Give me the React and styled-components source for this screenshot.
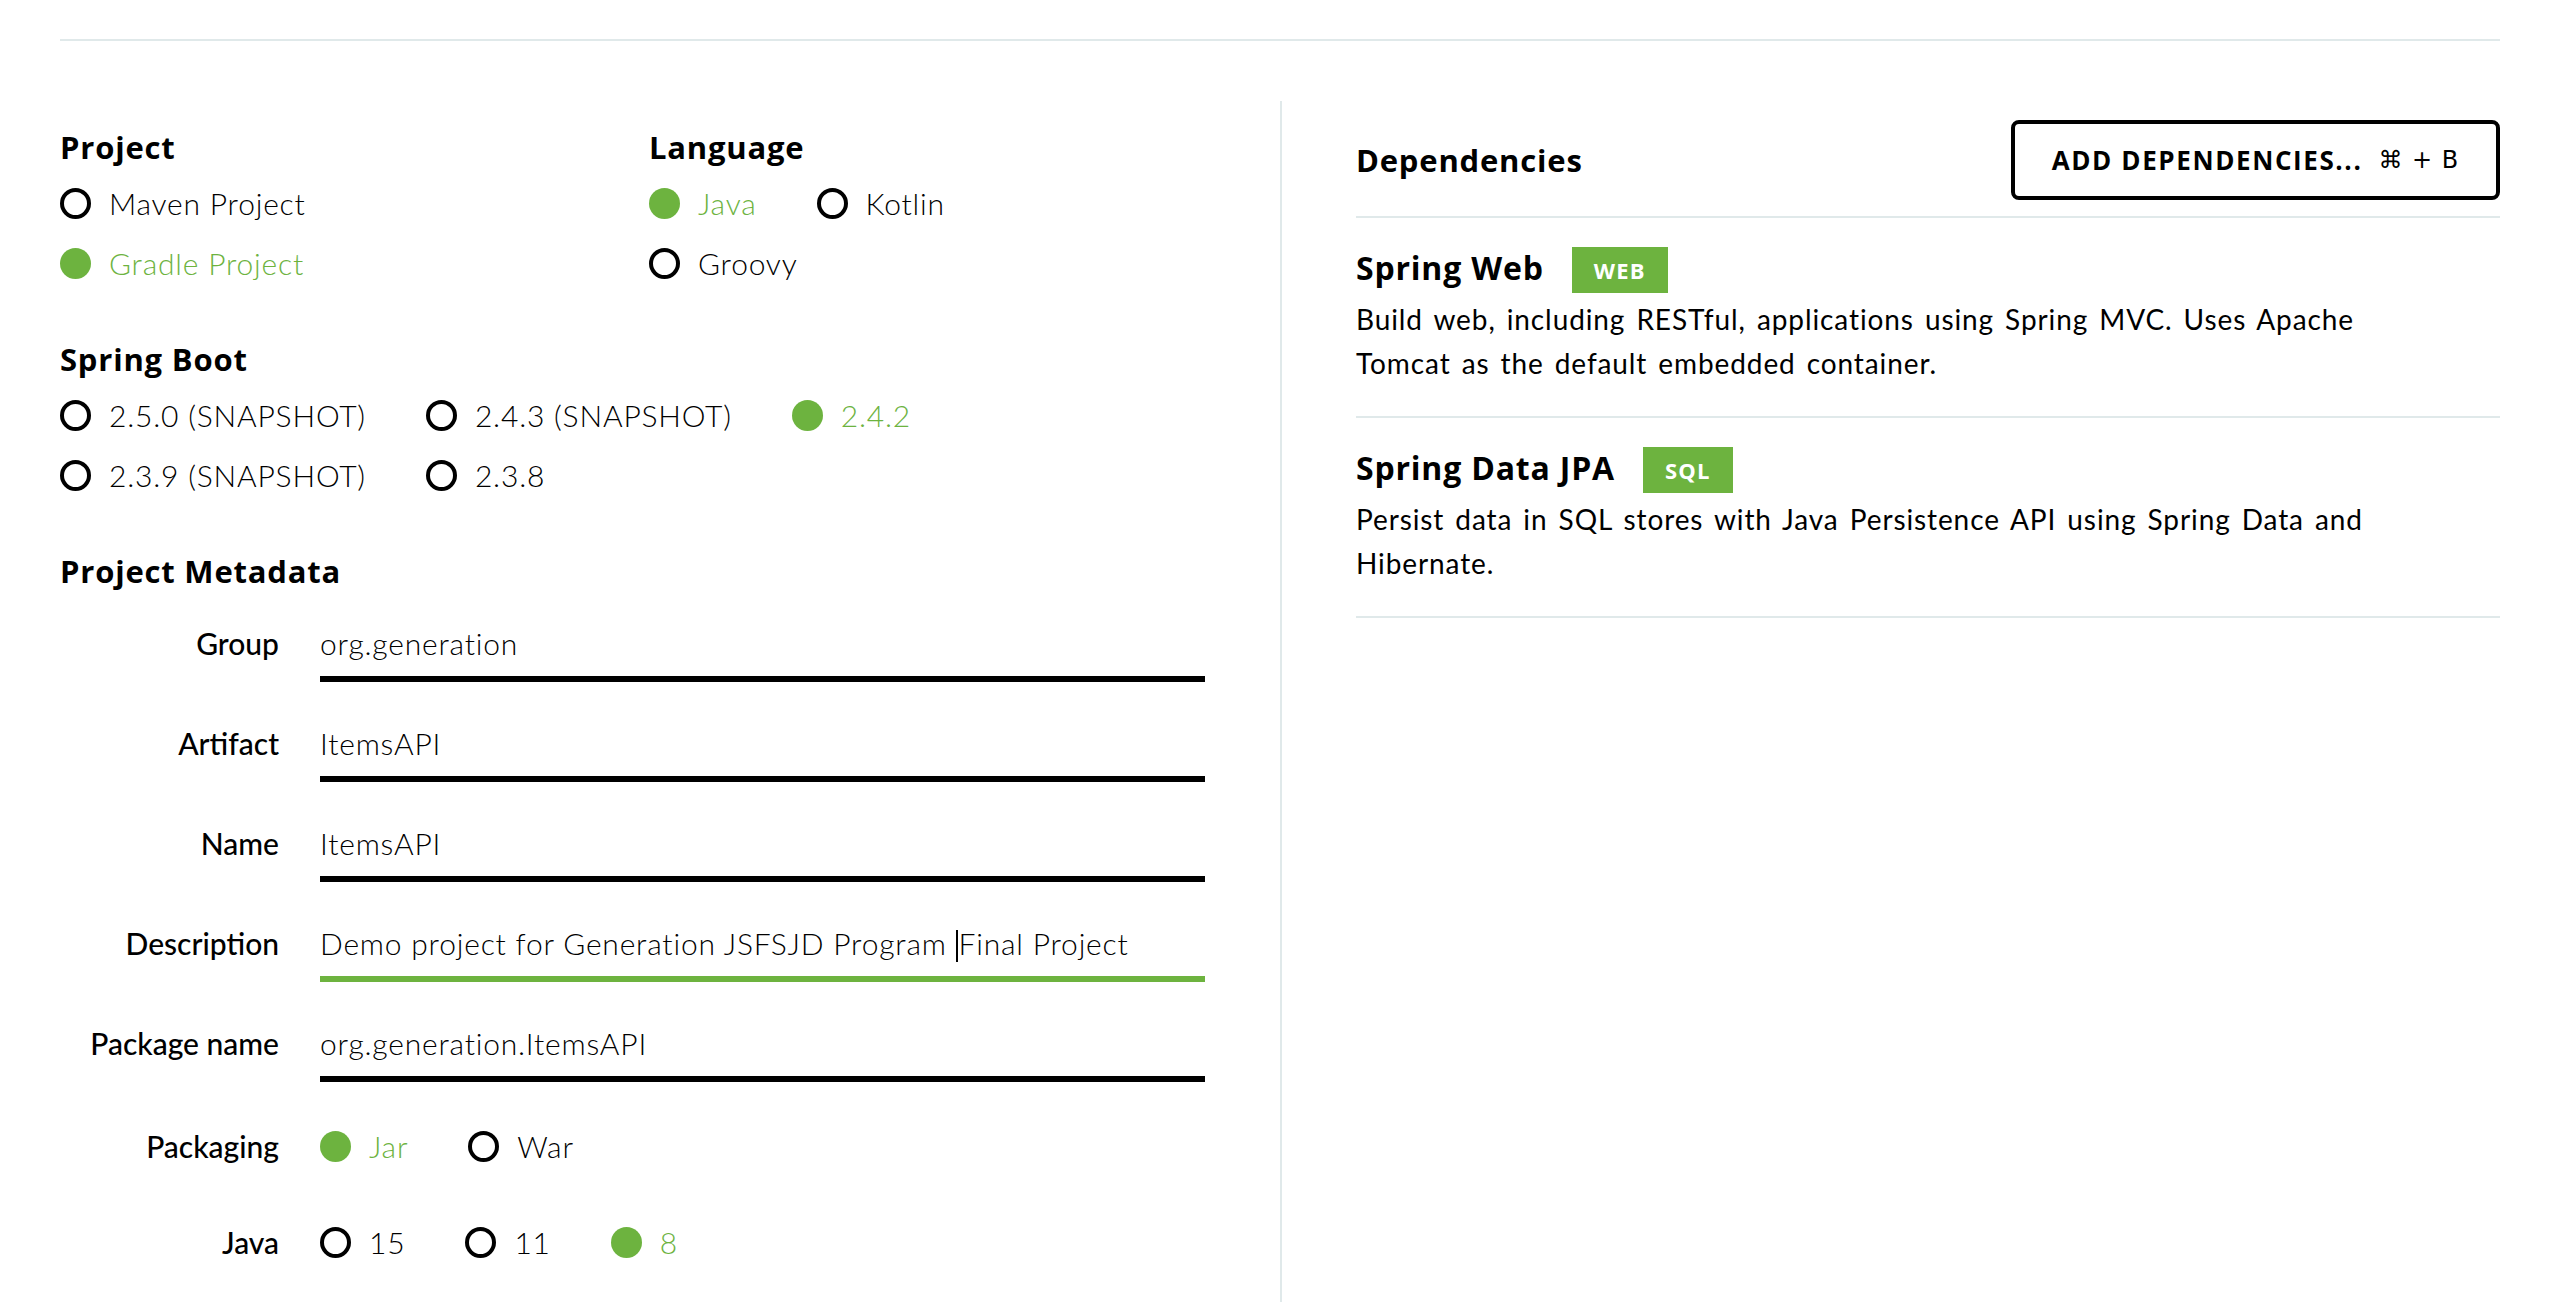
import React from 'react';
import styled, { createGlobalStyle } from 'styled-components';

const GREEN = '#6db33f';
const LINE = '#e0e9ea';
const HEAD_FONT = '"Open Sans", Lato, sans-serif';

const GlobalStyle = createGlobalStyle`
  html, body {
    margin: 0;
    padding: 0;
    background: #fff;
  }
  body {
    font-family: Lato, "Open Sans", sans-serif;
    color: #000;
  }
`;

const Page = styled.div`
  box-sizing: border-box;
  min-height: 1302px;
  padding: 39px 50px 0 60px;
`;

const TopRule = styled.div`
  height: 2px;
  background: ${LINE};
`;

const Main = styled.div`
  display: grid;
  grid-template-columns: 1220px 1fr;
  margin-top: 60px;
`;

const LeftCol = styled.div`
  padding: 28px 75px 40px 0;
`;

const RightCol = styled.div`
  border-left: 2px solid ${LINE};
  padding: 19px 0 0 74px;
`;

const TopGrid = styled.div`
  display: grid;
  grid-template-columns: 589px 1fr;
`;

const Section = styled.section`
  margin-bottom: 60px;
`;

const SectionTitle = styled.h2`
  margin: 0 0 20px;
  font-family: ${HEAD_FONT};
  font-size: 31px;
  line-height: 36px;
  font-weight: 700;
  letter-spacing: 0.8px;
`;

const RadioGroup = styled.div`
  display: flex;
  flex-wrap: wrap;
  column-gap: 60px;
  row-gap: 24px;
  max-width: ${(p) => p.$max || 'none'};
`;

const RadioItem = styled.label`
  display: flex;
  align-items: center;
  gap: 18px;
  height: 36px;
  font-size: 30px;
  font-weight: 300;
  letter-spacing: 0.8px;
  white-space: nowrap;
  color: ${(p) => (p.$checked ? GREEN : '#000')};
`;

const Dot = styled.span`
  flex: none;
  box-sizing: border-box;
  width: 31px;
  height: 31px;
  border-radius: 50%;
  border: ${(p) => (p.$checked ? 'none' : '4px solid #000')};
  background: ${(p) => (p.$checked ? GREEN : '#fff')};
`;

const Fields = styled.div`
  display: flex;
  flex-direction: column;
  margin-top: 34px;
`;

const Field = styled.div`
  display: grid;
  grid-template-columns: 219px 1fr;
  column-gap: 41px;
  align-items: ${(p) => (p.$radios ? 'center' : 'start')};
  margin-top: ${(p) => (p.$top === undefined ? 41 : p.$top)}px;
`;

const FieldLabel = styled.div`
  text-align: right;
  font-size: 30px;
  line-height: 40px;
  font-weight: 500;
  white-space: nowrap;
`;

const Input = styled.div`
  font-size: 30px;
  line-height: 40px;
  font-weight: 300;
  letter-spacing: 0.8px;
  white-space: nowrap;
  padding-bottom: 13px;
  border-bottom: 6px solid ${(p) => (p.$focus ? GREEN : '#000')};
`;

const Caret = styled.span`
  display: inline-block;
  width: 2px;
  height: 32px;
  margin-right: 1px;
  background: #000;
  vertical-align: -7px;
`;

const DepHeader = styled.div`
  display: flex;
  align-items: center;
  justify-content: space-between;
  padding-bottom: 16px;
  border-bottom: 2px solid ${LINE};
`;

const DepHeading = styled.h2`
  margin: 0;
  font-family: ${HEAD_FONT};
  font-size: 31px;
  font-weight: 700;
  letter-spacing: 0.8px;
`;

const AddButton = styled.button`
  box-sizing: border-box;
  width: 489px;
  height: 80px;
  border: 4px solid #000;
  border-radius: 8px;
  background: #fff;
  color: #000;
  font-family: ${HEAD_FONT};
  font-size: 26px;
  font-weight: 700;
  letter-spacing: 1.6px;
  display: flex;
  align-items: center;
  justify-content: center;
  cursor: pointer;
`;

const Shortcut = styled.span`
  margin-left: 16px;
  font-weight: 400;
  letter-spacing: 1px;
  font-family: "DejaVu Sans", "Open Sans", sans-serif;
  font-size: 24px;
`;

const DepItem = styled.div`
  padding: 29px 0 31px;
  border-bottom: 2px solid ${LINE};
`;

const DepTitleRow = styled.div`
  display: flex;
  align-items: center;
  gap: 28px;
  height: 46px;
`;

const DepName = styled.div`
  font-family: ${HEAD_FONT};
  font-size: 32px;
  line-height: 1;
  padding-bottom: 5px;
  font-weight: 700;
  letter-spacing: 0.8px;
`;

const Badge = styled.span`
  display: flex;
  align-items: center;
  height: 46px;
  padding: 0 22px;
  background: ${GREEN};
  color: #fff;
  font-family: ${HEAD_FONT};
  font-size: 22px;
  font-weight: 700;
  letter-spacing: 1.2px;
`;

const DepDesc = styled.p`
  margin: 4px 0 0;
  max-width: 1050px;
  font-size: 28px;
  line-height: 44px;
  font-weight: 400;
  letter-spacing: 0.9px;
  word-spacing: 3px;
`;

function Radio({ label, checked }) {
  return (
    <RadioItem $checked={checked}>
      <Dot $checked={checked} />
      {label}
    </RadioItem>
  );
}

const deps = [
  {
    name: 'Spring Web',
    tag: 'WEB',
    desc: 'Build web, including RESTful, applications using Spring MVC. Uses Apache Tomcat as the default embedded container.',
  },
  {
    name: 'Spring Data JPA',
    tag: 'SQL',
    desc: 'Persist data in SQL stores with Java Persistence API using Spring Data and Hibernate.',
  },
];

export default function App() {
  return (
    <>
      <GlobalStyle />
      <Page>
        <TopRule />
        <Main>
          <LeftCol>
            <TopGrid>
              <Section>
                <SectionTitle>Project</SectionTitle>
                <RadioGroup $max="520px">
                  <Radio label="Maven Project" />
                  <Radio label="Gradle Project" checked />
                </RadioGroup>
              </Section>
              <Section>
                <SectionTitle>Language</SectionTitle>
                <RadioGroup $max="460px">
                  <Radio label="Java" checked />
                  <Radio label="Kotlin" />
                  <Radio label="Groovy" />
                </RadioGroup>
              </Section>
            </TopGrid>

            <Section>
              <SectionTitle>Spring Boot</SectionTitle>
              <RadioGroup>
                <Radio label="2.5.0 (SNAPSHOT)" />
                <Radio label="2.4.3 (SNAPSHOT)" />
                <Radio label="2.4.2" checked />
                <Radio label="2.3.9 (SNAPSHOT)" />
                <Radio label="2.3.8" />
              </RadioGroup>
            </Section>

            <section>
              <SectionTitle>Project Metadata</SectionTitle>
              <Fields>
                <Field $top={0}>
                  <FieldLabel>Group</FieldLabel>
                  <Input>org.generation</Input>
                </Field>
                <Field>
                  <FieldLabel>Artifact</FieldLabel>
                  <Input>ItemsAPI</Input>
                </Field>
                <Field>
                  <FieldLabel>Name</FieldLabel>
                  <Input>ItemsAPI</Input>
                </Field>
                <Field>
                  <FieldLabel>Description</FieldLabel>
                  <Input $focus>
                    Demo project for Generation JSFSJD Program <Caret />Final Project
                  </Input>
                </Field>
                <Field>
                  <FieldLabel>Package name</FieldLabel>
                  <Input>org.generation.ItemsAPI</Input>
                </Field>
                <Field $radios $top={44}>
                  <FieldLabel>Packaging</FieldLabel>
                  <RadioGroup>
                    <Radio label="Jar" checked />
                    <Radio label="War" />
                  </RadioGroup>
                </Field>
                <Field $radios $top={56}>
                  <FieldLabel>Java</FieldLabel>
                  <RadioGroup>
                    <Radio label="15" />
                    <Radio label="11" />
                    <Radio label="8" checked />
                  </RadioGroup>
                </Field>
              </Fields>
            </section>
          </LeftCol>

          <RightCol>
            <DepHeader>
              <DepHeading>Dependencies</DepHeading>
              <AddButton>
                ADD DEPENDENCIES...
                <Shortcut>⌘ + B</Shortcut>
              </AddButton>
            </DepHeader>
            {deps.map((d) => (
              <DepItem key={d.name}>
                <DepTitleRow>
                  <DepName>{d.name}</DepName>
                  <Badge>{d.tag}</Badge>
                </DepTitleRow>
                <DepDesc>{d.desc}</DepDesc>
              </DepItem>
            ))}
          </RightCol>
        </Main>
      </Page>
    </>
  );
}
